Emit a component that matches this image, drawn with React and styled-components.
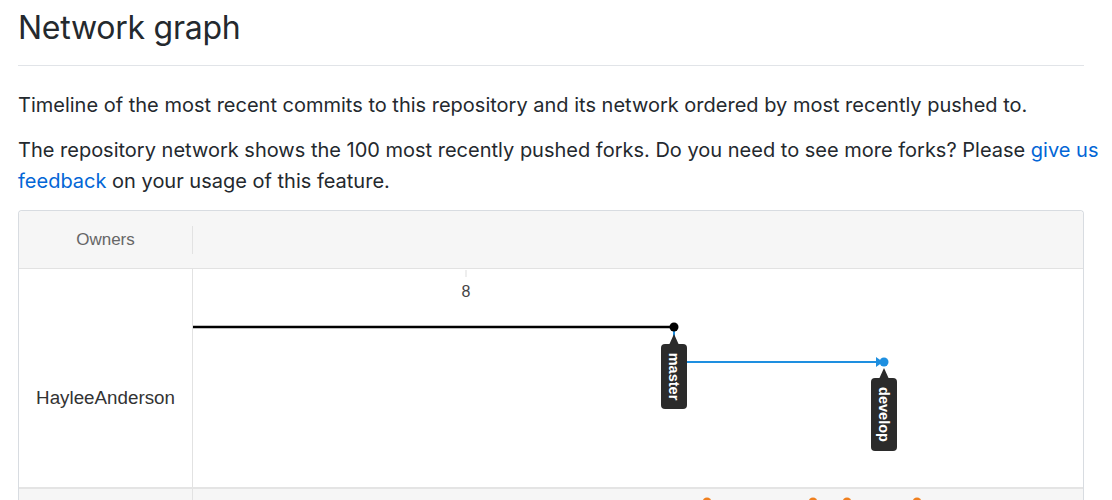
import React from "react";
import styled, { createGlobalStyle } from "styled-components";

const Global = createGlobalStyle`
  html, body { margin: 0; padding: 0; background: #fff; }
  body { font-family: Inter, "Liberation Sans", sans-serif; color: #24292e; }
`;

const Page = styled.div`
  width: 1066px;
  margin-left: 18px;
  padding-top: 8px;
`;

const Title = styled.h2`
  margin: 0;
  font-family: Inter, "Liberation Sans", sans-serif;
  font-size: 32px;
  font-weight: 400;
  line-height: 40px;
  padding-bottom: 17px;
  border-bottom: 1px solid #e1e4e8;
  letter-spacing: -0.25px;
`;

const Para = styled.p`
  margin: ${(p) => p.$top}px -24px 0 0;
  font-size: 20px;
  line-height: 31px;
  color: #24292e;
`;

const Link = styled.a`
  color: #0366d6;
  text-decoration: none;
`;

const Network = styled.div`
  margin-top: 13px;
  border: 1px solid #d8dce1;
  border-bottom: none;
  border-radius: 4px 4px 0 0;
  font-family: "Liberation Sans", Arial, sans-serif;
`;

const HeaderRow = styled.div`
  display: grid;
  grid-template-columns: 174px 1fr;
  align-items: center;
  height: 57px;
  background: #f6f6f6;
  border-bottom: 1px solid #e2e2e2;
  border-radius: 4px 4px 0 0;
`;

const HeaderCell = styled.div`
  text-align: center;
  font-size: 17px;
  color: #666;
  height: 28px;
  line-height: 28px;
  border-right: 1px solid #e2e2e2;
`;

const Row = styled.div`
  display: grid;
  grid-template-columns: 174px 1fr;
  height: ${(p) => p.$h}px;
  background: ${(p) => (p.$alt ? "#f6f6f6" : "#fff")};
  border-bottom: ${(p) => (p.$last ? "none" : "2px solid #e4e4e4")};
  overflow: hidden;
`;

const OwnerCell = styled.div`
  box-sizing: border-box;
  padding-top: 118px;
  text-align: center;
  font-size: 18.8px;
  line-height: 22px;
  color: #333;
  border-right: 1px solid #e2e2e2;
`;

const GraphCell = styled.div`
  position: relative;
`;

const Graph = styled.svg`
  display: block;
`;

function BranchLabel({ x, y, h, text }) {
  const w = 26;
  const cx = x + w / 2;
  return (
    <g>
      <path
        d={`M${cx} ${y - 10} L${cx + 5} ${y + 1} L${cx - 5} ${y + 1} Z`}
        fill="#2b2b2b"
      />
      <rect x={x} y={y} width={w} height={h} rx={4} fill="#2b2b2b" />
      <text
        x={0}
        y={0}
        transform={`translate(${cx - 5}, ${y + h / 2}) rotate(90)`}
        textAnchor="middle"
        fill="#fff"
        fontSize="14.5"
        fontWeight="700"
        fontFamily="'Liberation Sans', Arial, sans-serif"
      >
        {text}
      </text>
    </g>
  );
}

function MainGraph() {
  return (
    <Graph width="890" height="216" viewBox="0 0 890 216">
      <line x1="273" y1="1" x2="273" y2="8" stroke="#ddd" strokeWidth="1" />
      <text
        x="273"
        y="28"
        textAnchor="middle"
        fontSize="16"
        fill="#444"
        fontFamily="'Liberation Sans', Arial, sans-serif"
      >
        8
      </text>
      <line x1="0" y1="58" x2="481" y2="58" stroke="#000" strokeWidth="2.5" />
      <path d="M481 58 V93 H684" fill="none" stroke="#1e8fe0" strokeWidth="2" />
      <path d="M683 88 L690 93 L683 98 Z" fill="#1e8fe0" />
      <circle cx="481" cy="58" r="4.5" fill="#000" />
      <circle cx="691" cy="93" r="4.5" fill="#1e8fe0" />
      <BranchLabel x={468} y={75} h={65} text="master" />
      <BranchLabel x={678} y={109} h={73} text="develop" />
    </Graph>
  );
}

function SecondGraph() {
  const dots = [514, 620, 654, 724];
  return (
    <Graph width="890" height="40" viewBox="0 0 890 40">
      <line x1="0" y1="13" x2="890" y2="13" stroke="#f6c8a8" strokeWidth="1.5" />
      {dots.map((x) => (
        <circle key={x} cx={x} cy="13" r="4.5" fill="#f0801f" />
      ))}
    </Graph>
  );
}

export default function App() {
  return (
    <>
      <Global />
      <Page>
        <Title>Network graph</Title>
        <Para $top={24}>
          Timeline of the most recent commits to this repository and its network ordered by most
          recently pushed to.
        </Para>
        <Para $top={14}>
          The repository network shows the 100 most recently pushed forks. Do you need to see more
          forks? Please <Link href="#">give us feedback</Link> on your usage of this feature.
        </Para>
        <Network>
          <HeaderRow>
            <HeaderCell>Owners</HeaderCell>
            <div />
          </HeaderRow>
          <Row $h={218}>
            <OwnerCell>HayleeAnderson</OwnerCell>
            <GraphCell>
              <MainGraph />
            </GraphCell>
          </Row>
          <Row $h={60} $alt $last>
            <OwnerCell />
            <GraphCell>
              <SecondGraph />
            </GraphCell>
          </Row>
        </Network>
      </Page>
    </>
  );
}
